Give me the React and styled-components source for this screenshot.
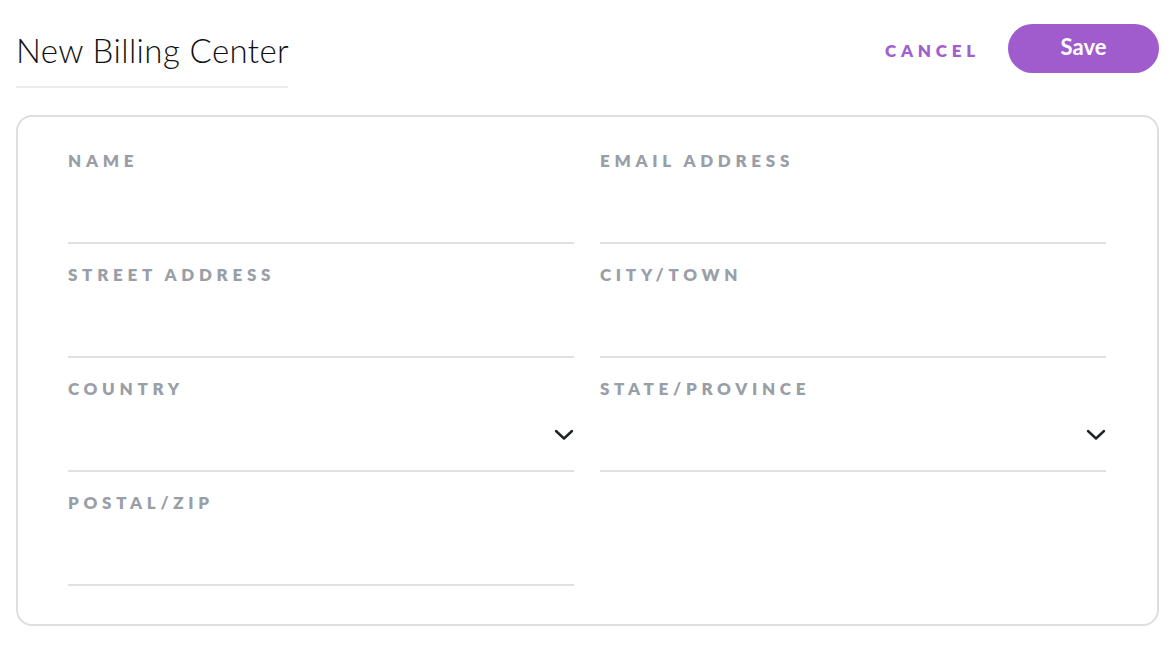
import styled, { createGlobalStyle } from "styled-components";

const GlobalStyle = createGlobalStyle`
    body {
        margin: 0;
        background: #ffffff;
        font-family: "Lato", "Noto Sans", sans-serif;
    }
`;

const fields = [
    { label: "NAME" },
    { label: "EMAIL ADDRESS" },
    { label: "STREET ADDRESS" },
    { label: "CITY/TOWN" },
    { label: "COUNTRY", select: true },
    { label: "STATE/PROVINCE", select: true },
    { label: "POSTAL/ZIP" },
];

function Chevron() {
    return (
        <svg width="20" height="12" viewBox="0 0 20 12" fill="none">
            <path d="M2 2 L10 9.5 L18 2" stroke="#1f2226" strokeWidth="2.4" strokeLinecap="round" strokeLinejoin="round" />
        </svg>
    );
}

export default function App() {
    return (
        <Page>
            <GlobalStyle />
            <Header>
                <Title>New Billing Center</Title>
                <Actions>
                    <CancelButton>CANCEL</CancelButton>
                    <SaveButton>Save</SaveButton>
                </Actions>
            </Header>
            <Card>
                <FieldGrid>
                    {fields.map((f) => (
                        <Field key={f.label}>
                            <Label>{f.label}</Label>
                            <InputArea>{f.select && <Chevron />}</InputArea>
                        </Field>
                    ))}
                </FieldGrid>
            </Card>
        </Page>
    );
}

const Page = styled.div`
    padding: 16px 15px 20px 16px;
`;

const Header = styled.div`
    display: flex;
    justify-content: space-between;
    align-items: flex-start;
`;

const Title = styled.h1`
    margin: 0;
    padding: 15px 0 17px 0;
    width: 272px;
    font-size: 33px;
    line-height: 38px;
    font-weight: 300;
    letter-spacing: 0.4px;
    color: #111;
    white-space: nowrap;
    border-bottom: 2px solid #ebebf0;
`;

const Actions = styled.div`
    display: flex;
    align-items: center;
    gap: 28px;
    margin-top: 8px;
`;

const CancelButton = styled.button`
    background: none;
    border: none;
    padding: 3px 0 0;
    font-family: "Lato", sans-serif;
    font-size: 17px;
    font-weight: 800;
    letter-spacing: 4.8px;
    color: #a25fcf;
    cursor: pointer;
`;

const SaveButton = styled.button`
    width: 151px;
    height: 49px;
    border: none;
    border-radius: 25px;
    background: #a05ccc;
    color: #fff;
    font-family: "Lato", sans-serif;
    font-size: 22px;
    font-weight: 700;
    padding-bottom: 5px;
    cursor: pointer;
`;

const Card = styled.div`
    margin-top: 27px;
    border: 2px solid #dedede;
    border-radius: 16px;
    padding: 13px 51px 38px 50px;
`;

const FieldGrid = styled.div`
    display: grid;
    grid-template-columns: 506px 506px;
    column-gap: 26px;
`;

const Field = styled.div`
    display: flex;
    flex-direction: column;
    padding-top: 21px;
    border-bottom: 2px solid #dfe1e5;
`;

const Label = styled.div`
    font-size: 17px;
    line-height: 20px;
    font-weight: 800;
    letter-spacing: 4.7px;
    color: #9a9fa7;
    white-space: nowrap;
`;

const InputArea = styled.div`
    height: 71px;
    display: flex;
    align-items: center;
    justify-content: flex-end;
    padding-top: 1px;
    box-sizing: border-box;
`;
